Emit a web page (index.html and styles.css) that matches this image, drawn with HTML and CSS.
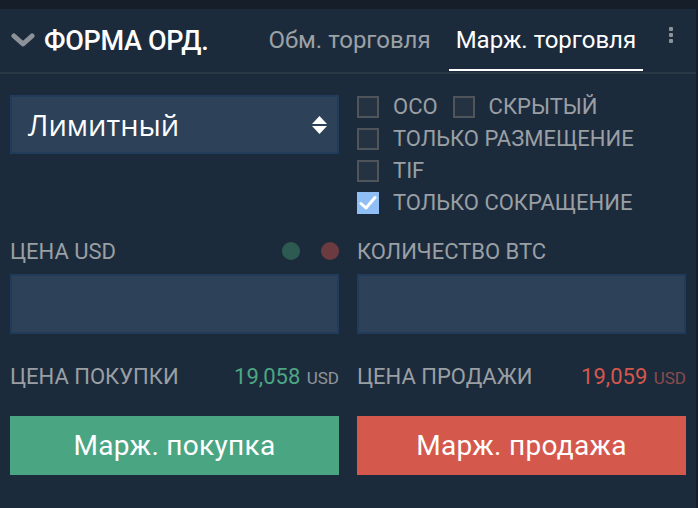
FILE: index.html
```html
<!DOCTYPE html>
<html lang="ru">
<head>
<meta charset="utf-8">
<title>Форма ордера</title>
<link rel="stylesheet" href="styles.css">
</head>
<body>
<div class="panel">
  <div class="header">
    <svg class="chev" width="24" height="16" viewBox="0 0 24 16"><path d="M3 3 L12 11 L21 3" fill="none" stroke="#8d9298" stroke-width="5" stroke-linecap="round" stroke-linejoin="round"/></svg>
    <div class="title">ФОРМА ОРД.</div>
    <div class="tabs">
      <div class="tab">Обм. торговля</div>
      <div class="tab active">Марж. торговля</div>
    </div>
    <div class="kebab"><span></span><span></span><span></span></div>
  </div>
  <div class="body">
    <div class="row top">
      <div class="col">
        <div class="select">
          <span>Лимитный</span>
          <svg width="15" height="18" viewBox="0 0 15 18"><path d="M7.5 0 L15 8 L0 8 Z M0 10 L15 10 L7.5 18 Z" fill="#ffffff"/></svg>
        </div>
      </div>
      <div class="col checks">
        <div class="check-row">
          <label class="check"><span class="box"></span>OCO</label>
          <label class="check"><span class="box"></span>СКРЫТЫЙ</label>
        </div>
        <div class="check-row"><label class="check"><span class="box"></span>ТОЛЬКО РАЗМЕЩЕНИЕ</label></div>
        <div class="check-row"><label class="check"><span class="box"></span>TIF</label></div>
        <div class="check-row"><label class="check"><span class="box on"><svg width="18" height="16" viewBox="0 0 18 16"><path d="M2 8.5 L7 13 L16 2.5" fill="none" stroke="#ffffff" stroke-width="3" stroke-linecap="round" stroke-linejoin="round"/></svg></span>ТОЛЬКО СОКРАЩЕНИЕ</label></div>
      </div>
    </div>
    <div class="row labels">
      <div class="col label-line">
        <span class="label">ЦЕНА USD</span>
        <span class="dots"><span class="dot green"></span><span class="dot red"></span></span>
      </div>
      <div class="col label-line"><span class="label">КОЛИЧЕСТВО BTC</span></div>
    </div>
    <div class="row inputs">
      <div class="col"><div class="input"></div></div>
      <div class="col"><div class="input"></div></div>
    </div>
    <div class="row prices">
      <div class="col price-line">
        <span class="label">ЦЕНА ПОКУПКИ</span>
        <span class="price buy">19,058 <small>USD</small></span>
      </div>
      <div class="col price-line">
        <span class="label">ЦЕНА ПРОДАЖИ</span>
        <span class="price sell">19,059 <small>USD</small></span>
      </div>
    </div>
    <div class="row buttons">
      <div class="col"><div class="btn buy-btn">Марж. покупка</div></div>
      <div class="col"><div class="btn sell-btn">Марж. продажа</div></div>
    </div>
  </div>
</div>
</body>
</html>
```
FILE: styles.css
```css
html, body {
  margin: 0;
  padding: 0;
  background: #161f29;
  height: 100%;
  overflow: hidden;
}
body {
  font-family: Roboto, "Liberation Sans", sans-serif;
}
.panel {
  margin-top: 9px;
  width: 696px;
  height: 499px;
  background: #1c2b3c;
}
.header {
  height: 65px;
  border-bottom: 2px solid #2b3947;
  display: flex;
  align-items: center;
  box-sizing: border-box;
}
.chev {
  margin-left: 11px;
  margin-top: 0;
}
.title {
  margin-left: 9px;
  color: #ffffff;
  font-size: 27px;
  font-weight: 500;
  letter-spacing: -0.3px;
}
.tabs {
  display: flex;
  margin-left: 53px;
  align-self: flex-start;
}
.tab {
  display: flex;
  align-items: center;
  padding: 0 7px;
  color: #9ca1a6;
  font-size: 24px;
  height: 62px;
  box-sizing: border-box;
}
.tab + .tab {
  margin-left: 11px;
}
.tab.active {
  color: #ffffff;
  border-bottom: 2px solid #ffffff;
  padding-top: 2px;
}
.kebab {
  margin-left: auto;
  margin-right: 23px;
  display: flex;
  flex-direction: column;
  gap: 2px;
  margin-top: -12px;
}
.kebab span {
  width: 4px;
  height: 4px;
  border-radius: 1px;
  background: #8d9298;
}
.body {
  padding: 0 10px;
}
.row {
  display: flex;
  gap: 18px;
}
.col {
  flex: 1 1 0;
  min-width: 0;
}
.row.top {
  margin-top: 21px;
}
.select {
  height: 59px;
  box-sizing: border-box;
  background: #2d4259;
  border: 2px solid #213b5a;
  display: flex;
  align-items: center;
  justify-content: space-between;
  padding: 0 10px 0 16px;
  color: #ffffff;
  font-family: "Open Sans", Roboto, sans-serif;
  font-size: 29px;
}
.checks {
  display: flex;
  flex-direction: column;
  gap: 10px;
  padding-top: 1px;
}
.check-row {
  display: flex;
  gap: 15px;
}
.check {
  display: flex;
  align-items: center;
  gap: 14px;
  color: #9a9fa4;
  font-size: 22px;
  height: 22px;
  line-height: 22px;
}
.box {
  flex: none;
  width: 22px;
  height: 22px;
  box-sizing: border-box;
  border: 2px solid #4f555b;
  background: #243241;
  display: flex;
  align-items: center;
  justify-content: center;
}
.box.on {
  background: #90bff5;
  border-color: #90bff5;
}
.row.labels {
  margin-top: 24px;
}
.label-line {
  display: flex;
  justify-content: space-between;
  align-items: center;
  height: 26px;
}
.label {
  color: #9a9fa4;
  font-size: 22px;
}
.dots {
  display: flex;
  gap: 21px;
}
.dot {
  width: 18px;
  height: 18px;
  border-radius: 50%;
}
.dot.green { background: #2e5b51; }
.dot.red { background: #6b3b40; }
.row.inputs {
  margin-top: 10px;
}
.input {
  height: 60px;
  box-sizing: border-box;
  background: #2d4259;
  border: 2px solid #213b5a;
}
.row.prices {
  margin-top: 30px;
}
.price-line {
  display: flex;
  justify-content: space-between;
  align-items: baseline;
  height: 26px;
}
.price {
  font-size: 22px;
}
.price small {
  font-size: 17px;
  margin-left: 1px;
}
.price.buy { color: #4ca683; }
.price.buy small { color: #8f959b; }
.price.sell { color: #d5574c; }
.price.sell small { color: #8a4b4c; }
.row.buttons {
  margin-top: 26px;
}
.btn {
  height: 59px;
  display: flex;
  align-items: center;
  justify-content: center;
  color: #ffffff;
  font-size: 28px;
  letter-spacing: 0.3px;
  white-space: nowrap;
}
.buy-btn { background: #4aa583; }
.sell-btn { background: #d4584c; }
```
